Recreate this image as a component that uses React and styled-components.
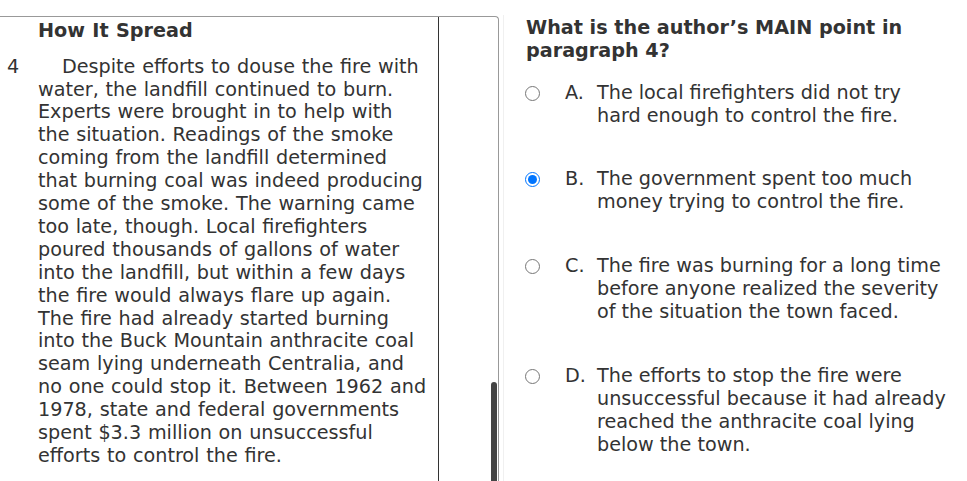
import styled, { createGlobalStyle } from "styled-components";

const GlobalStyle = createGlobalStyle`
  html, body {
    margin: 0;
    padding: 0;
    height: 100%;
    background: #fff;
    overflow: hidden;
  }
  body {
    font-family: Verdana, "DejaVu Sans", sans-serif;
    color: #333;
  }
`;

const Page = styled.div`
  display: flex;
  height: 100vh;
`;

const PassagePanel = styled.section`
  display: flex;
  width: 498px;
  margin-top: 16px;
  border-top: 1px solid #999;
  border-right: 1px solid #999;
  border-top-right-radius: 4px;
`;

const PassageText = styled.div`
  width: 439px;
  flex-shrink: 0;
  border-right: 1px solid #333;
  padding: 2px 0 0 0;
  box-sizing: border-box;
  font-size: 19.2px;
  line-height: 22.9px;
  word-spacing: 0.65px;
`;

const PassageHeading = styled.h3`
  margin: 0 0 13.6px 38px;
  font-size: 19.2px;
  font-weight: bold;
  line-height: 23px;
`;

const ParagraphRow = styled.div`
  display: grid;
  grid-template-columns: 38px 1fr;
`;

const ParagraphNumber = styled.span`
  padding-left: 7px;
`;

const Paragraph = styled.p`
  margin: 0;
  white-space: nowrap;
`;

const Line = styled.span`
  display: block;
  padding-left: ${(p) => (p.$indent ? "24px" : "0")};
`;

const ScrollTrack = styled.div`
  flex: 1;
  display: flex;
  justify-content: flex-end;
  padding-top: 365px;
`;

const ScrollThumb = styled.div`
  width: 6px;
  height: 99px;
  margin-right: 1px;
  background: #444;
  border-radius: 3px 3px 0 0;
`;

const QuestionPanel = styled.section`
  flex: 1;
  margin: 15px 0 0 4px;
  border-left: 1px solid #f0f0f0;
  padding: 1px 17px 0 22px;
`;

const Question = styled.h2`
  margin: 0 0 18.7px;
  font-size: 19.2px;
  line-height: 23px;
  font-weight: bold;
  width: 410px;
`;

const Options = styled.div`
  display: flex;
  flex-direction: column;
  gap: 40.7px;
`;

const Option = styled.label`
  display: grid;
  grid-template-columns: 39px 32px 1fr;
  font-size: 19.2px;
  line-height: 23px;
`;

const Radio = styled.input.attrs({ type: "radio", name: "answer" })`
  width: 15px;
  height: 15px;
  margin: 5px 0 0 -1px;
`;

const Letter = styled.span``;

const OptionText = styled.span``;

const passageLines = [
  "Despite efforts to douse the fire with",
  "water, the landfill continued to burn.",
  "Experts were brought in to help with",
  "the situation. Readings of the smoke",
  "coming from the landfill determined",
  "that burning coal was indeed producing",
  "some of the smoke. The warning came",
  "too late, though. Local firefighters",
  "poured thousands of gallons of water",
  "into the landfill, but within a few days",
  "the fire would always flare up again.",
  "The fire had already started burning",
  "into the Buck Mountain anthracite coal",
  "seam lying underneath Centralia, and",
  "no one could stop it. Between 1962 and",
  "1978, state and federal governments",
  "spent $3.3 million on unsuccessful",
  "efforts to control the fire.",
];

const options = [
  { letter: "A.", text: "The local firefighters did not try hard enough to control the fire." },
  { letter: "B.", text: "The government spent too much money trying to control the fire.", checked: true },
  { letter: "C.", text: "The fire was burning for a long time before anyone realized the severity of the situation the town faced." },
  { letter: "D.", text: "The efforts to stop the fire were unsuccessful because it had already reached the anthracite coal lying below the town." },
];

export default function App() {
  return (
    <>
      <GlobalStyle />
      <Page>
        <PassagePanel>
          <PassageText>
            <PassageHeading>How It Spread</PassageHeading>
            <ParagraphRow>
              <ParagraphNumber>4</ParagraphNumber>
              <Paragraph>
                {passageLines.map((line, i) => (
                  <Line key={i} $indent={i === 0}>
                    {line}
                  </Line>
                ))}
              </Paragraph>
            </ParagraphRow>
          </PassageText>
          <ScrollTrack>
            <ScrollThumb />
          </ScrollTrack>
        </PassagePanel>
        <QuestionPanel>
          <Question>What is the author’s MAIN point in paragraph 4?</Question>
          <Options>
            {options.map((o) => (
              <Option key={o.letter}>
                <Radio defaultChecked={o.checked} />
                <Letter>{o.letter}</Letter>
                <OptionText>{o.text}</OptionText>
              </Option>
            ))}
          </Options>
        </QuestionPanel>
      </Page>
    </>
  );
}
